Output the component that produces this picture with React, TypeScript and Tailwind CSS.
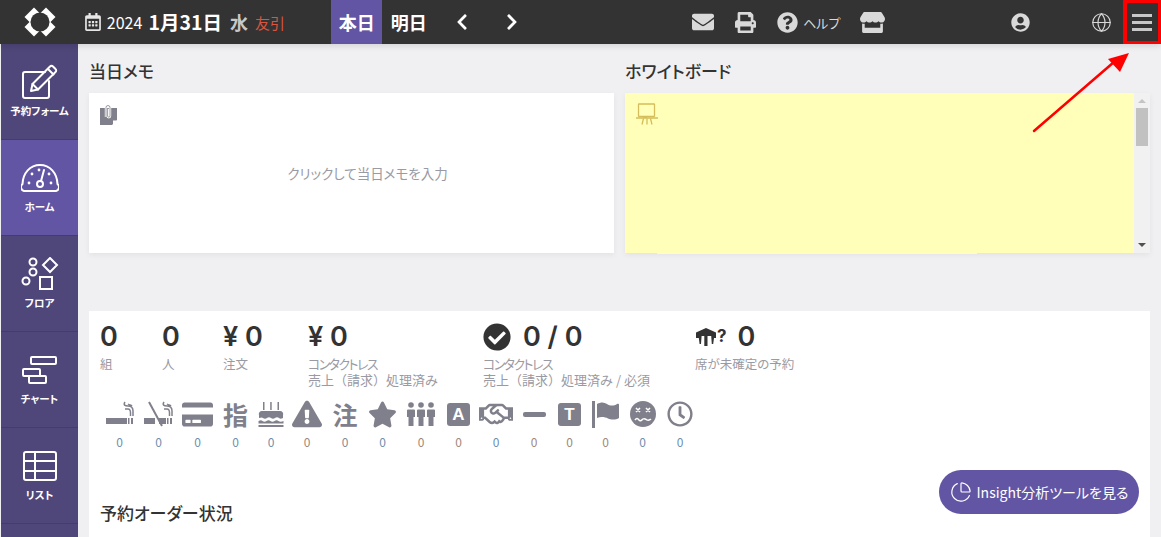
import { FaEnvelope, FaPrint, FaQuestionCircle, FaStore, FaUserCircle, FaRegCalendarAlt, FaChevronLeft, FaChevronRight, FaCreditCard, FaExclamationTriangle, FaStar, FaCheckCircle, FaRegHandshake, FaRegClock } from "react-icons/fa";
import { Globe, PieChart } from "lucide-react";
import type { ReactNode } from "react";

const font = "font-['Noto_Sans_CJK_JP','Noto_Sans',sans-serif] [font-feature-settings:'palt']";
const numFont = "font-['Inter','Noto_Sans_CJK_JP',sans-serif]";

function FormIcon() {
    return (
        <svg width="40" height="36" viewBox="0 0 40 36" fill="none" stroke="currentColor" strokeWidth="2" strokeLinejoin="round" strokeLinecap="round">
            <path d="M25 8H5a2 2 0 0 0-2 2v22a2 2 0 0 0 2 2h22a2 2 0 0 0 2-2V17" />
            <path d="M11 27l1.500-7L30 2.500a2 2 0 0 1 3 0l2.500 2.500a2 2 0 0 1 0 3L18 25.500z" />
            <path d="M12.500 20l5.500 5.500M28 5l5.500 5.500" />
        </svg>
    );
}

function GaugeIcon() {
    return (
        <svg width="38" height="30" viewBox="0 0 38 30" fill="none" stroke="currentColor" strokeWidth="2">
            <path d="M3 28a4 4 0 0 1-1.500-7C2 10 9 2 19 2s17 8 17.500 19a4 4 0 0 1-1.500 7z" />
            <circle cx="19" cy="21" r="3" />
            <path d="M20 18l3-11" strokeLinecap="round" />
            <g fill="currentColor" stroke="none">
                <circle cx="8" cy="20" r="1.400" />
                <circle cx="11" cy="11" r="1.400" />
                <circle cx="18" cy="7" r="1.400" />
                <circle cx="30" cy="20" r="1.400" />
                <circle cx="28" cy="11" r="1.400" />
            </g>
        </svg>
    );
}

function FloorIcon() {
    return (
        <svg width="38" height="34" viewBox="0 0 38 34" fill="none" stroke="currentColor" strokeWidth="2">
            <circle cx="12" cy="5" r="3.500" />
            <circle cx="12" cy="15" r="3.500" />
            <circle cx="5" cy="24" r="3.500" />
            <path d="M29 1l7 7-7 7-7-7z" />
            <rect x="19" y="20" width="12" height="12" />
        </svg>
    );
}

function ChartIcon() {
    return (
        <svg width="36" height="30" viewBox="0 0 36 30" fill="none" stroke="currentColor" strokeWidth="2" strokeLinejoin="round">
            <rect x="9" y="2" width="25" height="7" rx="1" />
            <rect x="1" y="14" width="17" height="7" rx="1" />
            <rect x="7" y="21" width="17" height="7" rx="1" />
        </svg>
    );
}

function ListIcon() {
    return (
        <svg width="34" height="30" viewBox="0 0 34 30" fill="none" stroke="currentColor" strokeWidth="2" strokeLinejoin="round">
            <rect x="1" y="1" width="32" height="28" rx="2" />
            <path d="M1 10h32M1 20h32M12 1v28" />
        </svg>
    );
}

function Logo() {
    return (
        <svg width="32" height="30" viewBox="0 0 32 30" fill="#fff">
            <polygon points="0.500,10 10,0.500 15.500,6 6,15.500" />
            <polygon points="31.500,10 22,0.500 16.500,6 26,15.500" />
            <polygon points="0.500,20 10,29.500 15.500,24 6,14.500" />
            <polygon points="31.500,20 22,29.500 16.500,24 26,14.500" />
            <circle cx="16" cy="15" r="9.500" fill="#333" />
        </svg>
    );
}

function TableQuestion() {
    return (
        <span className="flex items-center text-[#333]">
            <svg width="22" height="20" viewBox="0 0 22 20" fill="currentColor">
                <path d="M11 1l10 4.500V11h-2l-.8 6h-1.400l-.6-8h-3.700v10h-3.200V9H6.600L6 17H4.600L3.800 11H1V5.500z" />
            </svg>
            <span className="text-[17px] font-bold leading-none">?</span>
        </span>
    );
}

function NoteIcon() {
    return (
        <svg width="20" height="22" viewBox="0 0 20 22" fill="#80808c">
            <path d="M1 4h17v12l-5 5H1z" />
            <path d="M14 21l4-4.500h-4z" fill="#fff" />
            <path d="M7 13V3.500a2 2 0 0 1 4 0V12a1.200 1.200 0 0 1-2.400 0V5" fill="none" stroke="#fff" strokeWidth="2.400" />
            <path d="M7 13V3.500a2 2 0 0 1 4 0V12a1.200 1.200 0 0 1-2.400 0V5" fill="none" stroke="#80808c" strokeWidth="0.800" />
        </svg>
    );
}

function BoardIcon() {
    return (
        <svg width="22" height="22" viewBox="0 0 22 22" fill="none" stroke="#d4bd5a" strokeWidth="1.300">
            <rect x="2.500" y="1" width="16" height="12.500" rx="0.500" />
            <path d="M0 15h22" strokeWidth="1.500" />
            <path d="M7.500 15.500l-1.500 6M11 15.500v6M14.500 15.500l1.500 6" />
            <path d="M7 14h4" strokeWidth="1.800" />
        </svg>
    );
}

function Cigarette({ ban }: { ban?: boolean }) {
    return (
        <svg width="30" height="26" viewBox="0 0 30 26" fill="#80808c" stroke="none">
            <rect x={ban ? 0 : 1} y="17" width={ban ? 11 : 21} height="6" />
            {ban && <rect x="15" y="17" width="7" height="6" />}
            <rect x="23" y="17" width="1.500" height="6" />
            <rect x="26" y="17" width="2" height="6" />
            <path d="M20 1c-2 3 0 4 3 4 3.500 0 5 2 5 5v5M23 3c1.500 1 3 1 4 2M20 8h3c2 0 2.500 1.500 2.500 4v3" fill="none" stroke="#80808c" strokeWidth="1.500" />
            {ban && <path d="M5 1l13 24" fill="none" stroke="#80808c" strokeWidth="2" />}
        </svg>
    );
}

function CakeIcon() {
    return (
        <svg width="26" height="26" viewBox="0 0 26 26" fill="#80808c">
            <rect x="5" y="1" width="1.500" height="8" />
            <rect x="12.200" y="1" width="1.500" height="8" />
            <rect x="19.500" y="1" width="1.500" height="8" />
            <path d="M1 14a3 3 0 0 1 3-4h18a3 3 0 0 1 3 4v3c-2 1-3 1-4 0s-3-1-4 0-3 1-4 0-3-1-4 0-3 1-4 0-2-.500-4 0z" />
            <path d="M0.500 20c2-1 3-1 4 0s3 1 4 0 3-1 4 0 3 1 4 0 3-1 4 0 3 1 5 0v2.500h-25z" />
            <rect x="0.500" y="24" width="25" height="2" />
        </svg>
    );
}

function PeopleIcon() {
    return (
        <svg width="28" height="24" viewBox="0 0 28 24" fill="currentColor">
            {[0, 10, 20].map((x) => (
                <g key={x} transform={`translate(${x} 0)`}>
                    <circle cx="4" cy="3" r="2.800" />
                    <path d="M1 7.500h6a1 1 0 0 1 1 1V15H6.500v9h-5v-9H0V8.500a1 1 0 0 1 1-1z" />
                </g>
            ))}
        </svg>
    );
}

function FlagIcon() {
    return (
        <svg width="28" height="27" viewBox="0 0 28 27" fill="#80808c">
            <rect x="0" y="0" width="3" height="27" />
            <path d="M5 3c4-2 7-2 10 0s7 2 10 0c1-.500 2 0 2 .500V17c-3 2-8 2-11 .500S9 15.500 5 17z" />
        </svg>
    );
}

function DizzyIcon() {
    return (
        <svg width="26" height="26" viewBox="0 0 26 26">
            <circle cx="13" cy="13" r="13" fill="#80808c" />
            <path d="M6 7l4 4M10 7l-4 4M16 7l4 4M20 7l-4 4" stroke="#fff" strokeWidth="1.500" />
            <path d="M5 19c1.500-2 2.500-2 4 0s2.500 0 4-1 2.500 0 4 1 2.500 0 4-1" stroke="#fff" strokeWidth="1.500" fill="none" />
        </svg>
    );
}

function MenuBars() {
    return (
        <div className="w-[20px] -ml-[1px] flex flex-col gap-[4px]">
            <span className="h-[3px] bg-[#c8c8c8]" />
            <span className="h-[3px] bg-[#c8c8c8]" />
            <span className="h-[3px] bg-[#c8c8c8]" />
        </div>
    );
}

const navItems: { label: string; icon: ReactNode; active?: boolean }[] = [
    { label: "予約フォーム", icon: <FormIcon /> },
    { label: "ホーム", icon: <GaugeIcon />, active: true },
    { label: "フロア", icon: <FloorIcon /> },
    { label: "チャート", icon: <ChartIcon /> },
    { label: "リスト", icon: <ListIcon /> },
];

function Stat({ value, lines, className }: { value: ReactNode; lines: string[]; className: string }) {
    return (
        <div className={className}>
            <div className={`h-[29px] flex items-center text-[27px] font-semibold leading-none text-[#333] ${numFont}`}>{value}</div>
            <div className="mt-[5px] text-[12.500px] leading-[16px] text-[#9a9aa3] whitespace-nowrap">
                {lines.map((l) => (
                    <div key={l} className={l.startsWith("売上") ? "text-[13px] [font-feature-settings:normal]" : l.startsWith("コンタクト") ? "text-[13px] tracking-[-1.600px]" : ""}>{l}</div>
                ))}
            </div>
        </div>
    );
}

function TextGlyph({ children }: { children: string }) {
    return <span className="text-[25px] font-bold leading-none text-[#80808c]">{children}</span>;
}

function BoxGlyph({ children }: { children: string }) {
    return (
        <span className="w-[23px] h-[23px] rounded-[3px] bg-[#80808c] text-white flex items-center justify-center text-[17px] font-bold leading-none font-['Liberation_Sans',sans-serif]">
            {children}
        </span>
    );
}

const badges: { icon: ReactNode; w: string; color: string }[] = [
    { icon: <Cigarette />, w: "w-[39px]", color: "text-[#6f8fae]" },
    { icon: <Cigarette ban />, w: "w-[39px]", color: "text-[#6f8fae]" },
    { icon: <FaCreditCard size={31} />, w: "w-[39px]", color: "text-[#6f8fae]" },
    { icon: <TextGlyph>指</TextGlyph>, w: "w-[37px]", color: "text-[#6f8fae]" },
    { icon: <CakeIcon />, w: "w-[34px]", color: "text-[#6f8fae]" },
    { icon: <FaExclamationTriangle size={30} />, w: "w-[38px]", color: "text-[#a08878]" },
    { icon: <TextGlyph>注</TextGlyph>, w: "w-[38px]", color: "text-[#8a8a94]" },
    { icon: <FaStar size={29} />, w: "w-[37px]", color: "text-[#6f8fae]" },
    { icon: <PeopleIcon />, w: "w-[40px]", color: "text-[#a08878]" },
    { icon: <BoxGlyph>A</BoxGlyph>, w: "w-[35px]", color: "text-[#a08878]" },
    { icon: <FaRegHandshake size={34} />, w: "w-[40px]", color: "text-[#6f8fae]" },
    { icon: <span className="block w-[23px] h-[5px] rounded-[2px] bg-[#80808c]" />, w: "w-[36px]", color: "text-[#a08878]" },
    { icon: <BoxGlyph>T</BoxGlyph>, w: "w-[35px]", color: "text-[#a08878]" },
    { icon: <FlagIcon />, w: "w-[37px]", color: "text-[#a08878]" },
    { icon: <DizzyIcon />, w: "w-[37px]", color: "text-[#6f8fae]" },
    { icon: <FaRegClock size={26} />, w: "w-[38px]", color: "text-[#6f8fae]" },
];

export default function App() {
    return (
        <div className={`relative w-[1161px] h-[537px] overflow-hidden bg-[#f0f0f3] flex flex-col ${font}`}>
            <header className="h-[44px] shrink-0 bg-[#333] flex items-center text-white shadow-[0_2px_6px_rgba(0,0,0,0.12)] z-10">
                <div className="w-[78px] ml-[1px] flex justify-center items-center">
                    <Logo />
                </div>
                <div className="flex items-center ml-[5px] w-[248px]">
                    <FaRegCalendarAlt size={18} className="text-[#e6e6e6]" />
                    <span className="ml-[5px] text-[16px] leading-none">2024</span>
                    <span className="ml-[6px] text-[19.500px] font-bold leading-none">1月31日</span>
                    <span className="ml-[8px] text-[18px] font-bold leading-none text-[#c8c8c8]">水</span>
                    <span className="ml-[7px] text-[15px] leading-none text-[#d9553f]">友引</span>
                </div>
                <div className="h-full w-[51px] bg-[#6255a4] flex items-center justify-center text-[18px] font-bold">本日</div>
                <div className="w-[47px] ml-[3px] flex items-center justify-center text-[18px] font-bold">明日</div>
                <FaChevronLeft size={18} className="ml-[21px]" />
                <FaChevronRight size={18} className="ml-[32px]" />
                <div className="flex items-center ml-[171px] text-[#d9d9d9]">
                    <FaEnvelope size={22} />
                    <FaPrint size={21} className="ml-[21px]" />
                    <FaQuestionCircle size={21} className="ml-[21px]" />
                    <span className="ml-[5px] w-[36px] whitespace-nowrap text-[13px] leading-none">ヘルプ</span>
                    <FaStore size={25} className="ml-[21px]" />
                    <FaUserCircle size={19} className="ml-[126px]" />
                    <Globe size={21} strokeWidth={1.300} className="ml-[61px]" />
                </div>
                <div className="ml-[11px] w-[38px] h-full border-[3px] border-[#ff0000] border-l-[4px] flex items-center justify-center">
                    <MenuBars />
                </div>
            </header>
            <div className="flex flex-1 min-h-0">
                <nav className="w-[77px] ml-[1px] shrink-0 bg-[#4f4679] text-white flex flex-col overflow-hidden">
                    {navItems.map((n) => (
                        <div key={n.label} className={`h-[96px] shrink-0 flex flex-col items-center justify-center gap-[6px] border-b border-[#443c6a] ${n.active ? "bg-[#6255a4]" : ""}`}>
                            <div className="h-[36px] flex items-center justify-center">{n.icon}</div>
                            <span className="text-[10.500px] font-bold leading-none pb-[3px]">{n.label}</span>
                        </div>
                    ))}
                </nav>
                <main className="flex-1 min-w-0 pl-[11px] pr-[11px]">
                    <div className="flex gap-[11px]">
                        <section className="w-[525px]">
                            <h2 className="h-[49px] pt-[14px] text-[17px] font-medium leading-[26px] text-[#333]">当日メモ</h2>
                            <div className="relative h-[160px] pl-[32px] bg-white shadow-[0_2px_6px_rgba(0,0,0,0.06)] flex items-center justify-center text-[13.500px] text-[#9a9aa3]">
                                <span className="absolute left-[10px] top-[11px]"><NoteIcon /></span>
                                クリックして当日メモを入力
                            </div>
                        </section>
                        <section className="w-[525px]">
                            <h2 className="h-[49px] pt-[14px] text-[17px] font-medium leading-[26px] text-[#333]">ホワイトボード</h2>
                            <div className="relative h-[160px] bg-[#ffffb9] shadow-[0_2px_6px_rgba(0,0,0,0.06)] flex">
                                <div className="flex-1 pl-[11px] pt-[10px]">
                                    <BoardIcon />
                                </div>
                                <div className="w-[16px] bg-[#f1f1f1] flex flex-col items-center">
                                    <span className="mt-[6px] w-0 h-0 border-x-[4px] border-x-transparent border-b-[4px] border-b-[#c4c4c4]" />
                                    <div className="mt-[5px] w-[12px] h-[38px] bg-[#c1c1c1]" />
                                    <span className="mt-auto mb-[6px] w-0 h-0 border-x-[4px] border-x-transparent border-t-[4px] border-t-[#505050]" />
                                </div>
                                <span className="absolute left-[32px] top-[160px] w-[320px] h-[1px] bg-[#ffffb9]" />
                            </div>
                        </section>
                    </div>
                    <section className="mt-[58px] h-[300px] bg-white px-[11px] pt-[11px]">
                        <div className="flex items-start">
                            <Stat className="w-[62px]" value="0" lines={["組"]} />
                            <Stat className="w-[61px]" value="0" lines={["人"]} />
                            <Stat className="w-[85px]" value="¥ 0" lines={["注文"]} />
                            <Stat className="w-[175px]" value="¥ 0" lines={["コンタクトレス", "売上（請求）処理済み"]} />
                            <Stat className="w-[212px]" value={<><FaCheckCircle size={28} className="mr-[12px]" />0 / 0</>} lines={["コンタクトレス", "売上（請求）処理済み / 必須"]} />
                            <Stat className="w-[130px]" value={<><TableQuestion /><span className="ml-[11px]">0</span></>} lines={["席が未確定の予約"]} />
                        </div>
                        <div className="flex mt-[12px]">
                            {badges.map((b, i) => (
                                <div key={i} className={`${b.w} flex flex-col items-center text-[#80808c]`}>
                                    <div className="h-[28px] flex items-center justify-center">{b.icon}</div>
                                    <span className={`mt-[6px] text-[12px] leading-[15px] ${b.color}`}>0</span>
                                </div>
                            ))}
                        </div>
                        <h2 className="mt-[51px] text-[17px] font-medium leading-[26px] text-[#333]">予約オーダー状況</h2>
                    </section>
                </main>
            </div>
            <button className="absolute left-[939px] top-[470px] w-[200px] h-[44px] rounded-full bg-[#6255a4] text-white flex items-center justify-center gap-[5px] text-[14px]">
                <PieChart size={22} strokeWidth={1.300} />
                Insight分析ツールを見る
            </button>
            <svg className="absolute left-[1030px] top-[50px]" width="100" height="85" viewBox="0 0 100 85">
                <path d="M4 81L84 12" stroke="#ff0000" strokeWidth="2.500" strokeLinecap="round" />
                <path d="M99 3L90 22L78 9z" fill="#ff0000" />
            </svg>
        </div>
    );
}
